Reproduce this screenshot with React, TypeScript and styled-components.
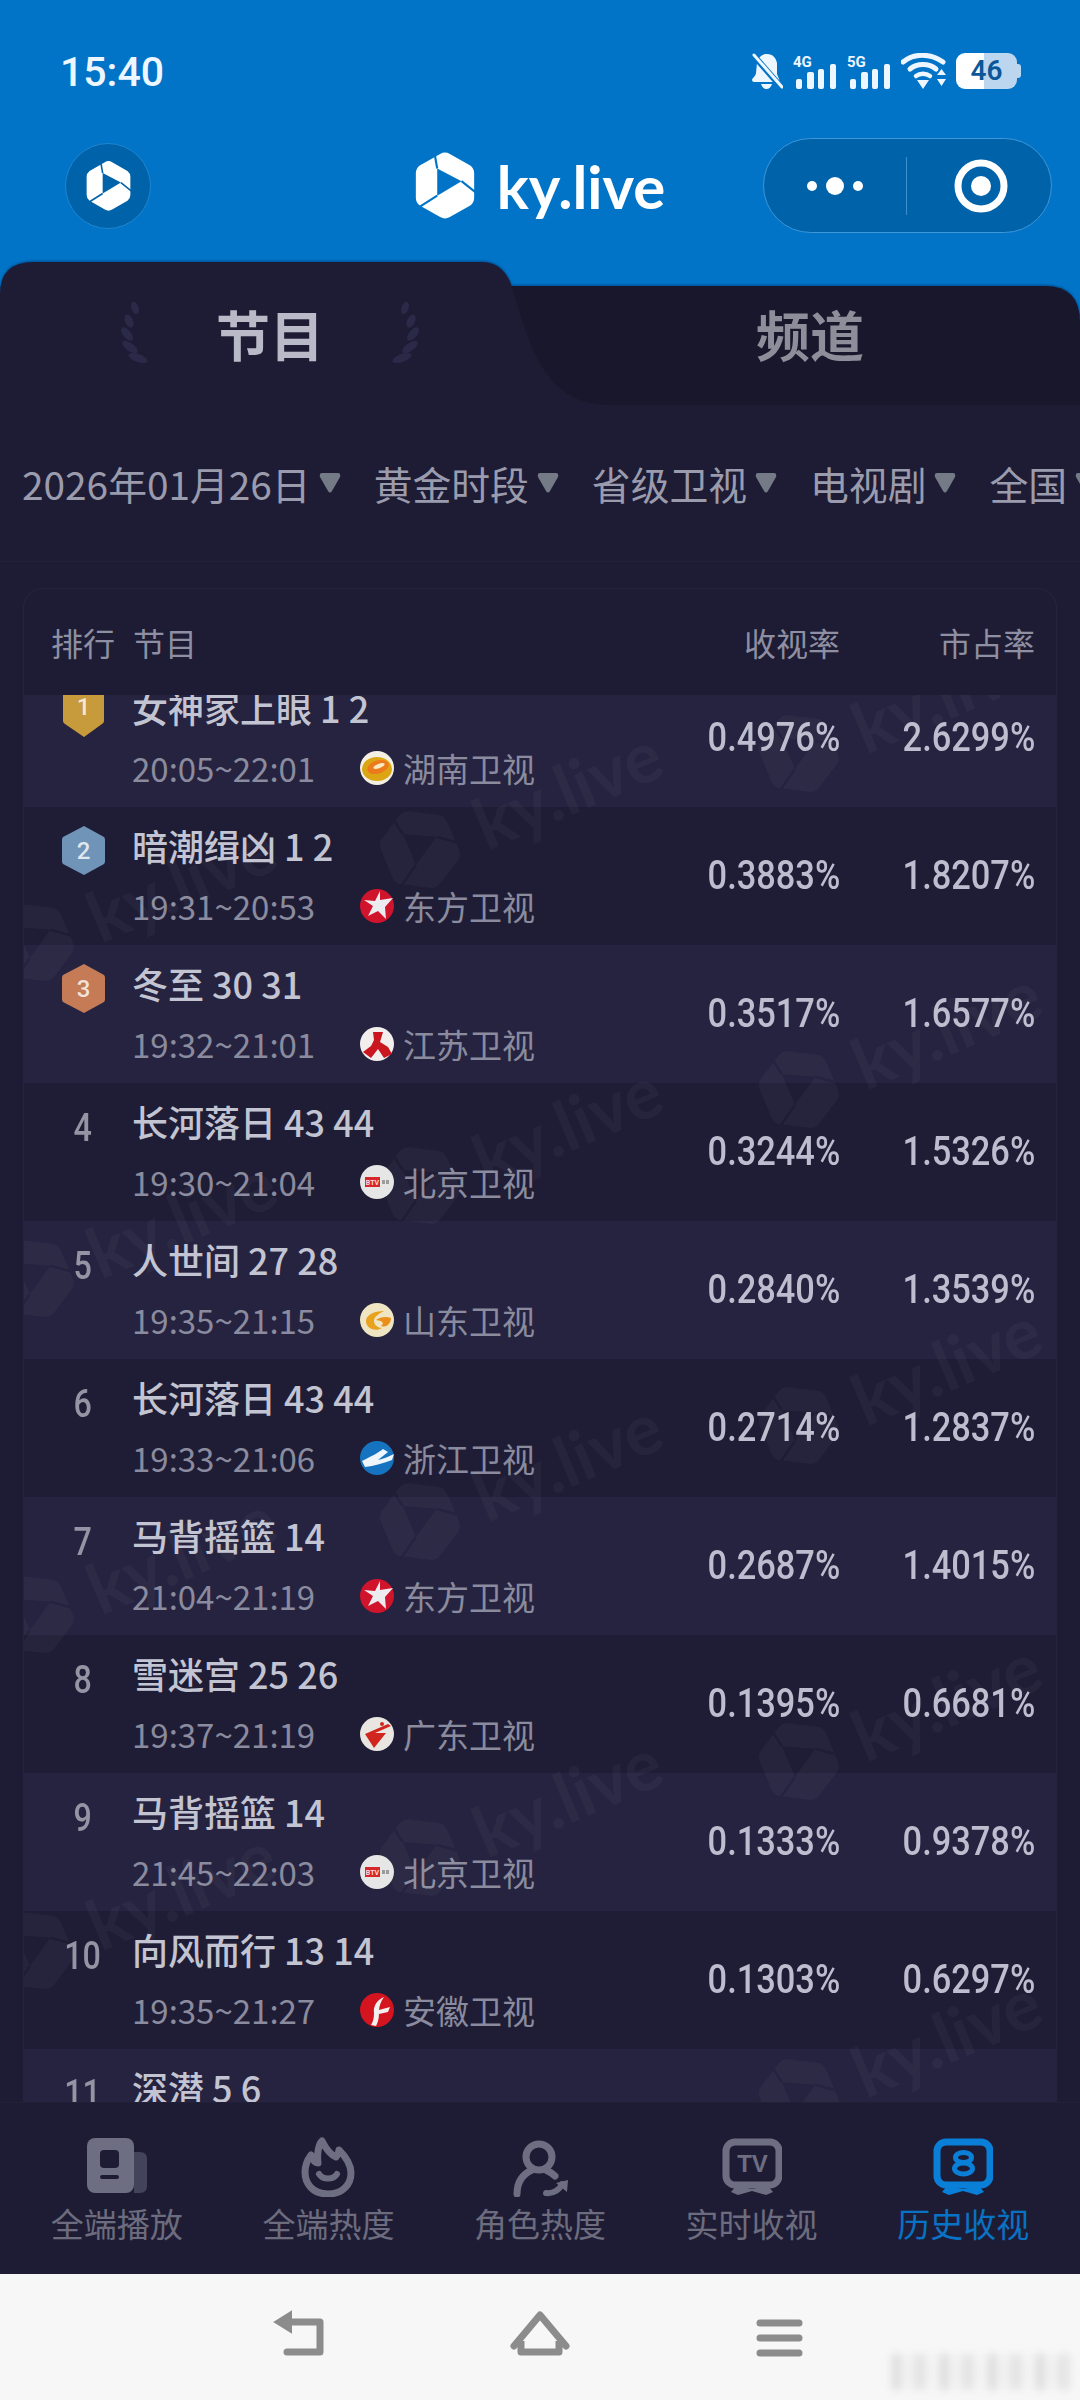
import React, { useId } from 'react';
import styled, { createGlobalStyle } from 'styled-components';

const CJK = '"Noto Sans CJK SC", "Noto Sans", sans-serif';
const BG = '#1e1c34';

const GlobalStyle = createGlobalStyle`
  html, body { margin: 0; padding: 0; background: ${BG}; }
  * { box-sizing: border-box; }
`;

const Page = styled.div`
  width: 1080px;
  height: 2400px;
  display: flex;
  flex-direction: column;
  overflow: hidden;
  background: ${BG};
  font-family: ${CJK};
`;

const Header = styled.header`
  background: #0174c8;
  height: 262px;
`;

const StatusBar = styled.div`
  height: 138px;
  padding: 52px 60px 0;
  display: flex;
  justify-content: space-between;
  align-items: flex-start;
`;

const Clock = styled.span`
  font: 500 41px/40px Roboto, sans-serif;
  color: #eef6ff;
`;

const StatusIcons = styled.div`
  display: flex;
  align-items: flex-start;
  gap: 10px;
  height: 36px;
  margin-top: 1px;
`;

const Battery = styled.div`
  position: relative;
  width: 61px;
  height: 36px;
  margin-right: 3px;
  border-radius: 9px;
  background: linear-gradient(90deg, #fff 0 46%, #bcd6ef 46% 100%);
  color: #0b5698;
  font: 600 28px/36px Roboto, sans-serif;
  text-align: center;
  &::after {
    content: '';
    position: absolute;
    right: -4px;
    top: 11px;
    width: 4px;
    height: 14px;
    border-radius: 0 3px 3px 0;
    background: #bcd6ef;
  }
`;

const AppBar = styled.div`
  height: 95px;
  padding: 0 28px;
  display: grid;
  grid-template-columns: 1fr auto 1fr;
  align-items: center;
`;

const AvatarCell = styled.div`
  padding-left: 37px;
`;

const Avatar = styled.div`
  width: 86px;
  height: 86px;
  border-radius: 50%;
  background: #0062a8;
  border: 1px solid #1f86d0;
  display: flex;
  align-items: center;
  justify-content: center;
`;

const Brand = styled.div`
  display: flex;
  align-items: center;
  gap: 22px;
  color: #fff;
  font: 700 60px/70px Lato, sans-serif;
`;

const Capsule = styled.div`
  justify-self: end;
  width: 289px;
  height: 95px;
  border-radius: 48px;
  background: #0062a8;
  border: 1.5px solid #3d97db;
  display: flex;
  align-items: center;
`;

const CapsuleCell = styled.div`
  flex: 1;
  display: flex;
  align-items: center;
  justify-content: center;
  & + & {
    flex: 0 0 145px;
    height: 58px;
    padding-left: 4px;
    border-left: 1.5px solid #3d8fcf;
  }
`;

const Tabs = styled.nav`
  position: relative;
  height: 143px;
  display: flex;
  background: #0174c8;
`;

const TabShape = styled.svg`
  position: absolute;
  left: 0;
  top: 0;
  filter: drop-shadow(0 -1px 1px rgba(0, 40, 90, 0.55));
`;

const Tab = styled.div<{ $active?: boolean }>`
  position: relative;
  flex: 1;
  display: flex;
  align-items: center;
  justify-content: center;
  gap: 66px;
  color: ${(p) => (p.$active ? '#b9bac7' : '#8e8e9b')};
  font-size: 54px;
  font-weight: 700;
  line-height: 60px;
`;

const FilterRow = styled.div`
  height: 157px;
  padding-left: 22px;
  display: flex;
  align-items: center;
  gap: 33px;
  overflow: hidden;
  white-space: nowrap;
  border-bottom: 1px solid rgba(255, 255, 255, 0.025);
`;

const FilterItem = styled.div`
  flex: none;
  display: flex;
  align-items: center;
  gap: 8px;
  color: #9a9bad;
  font-size: 38.8px;
  line-height: 50px;
`;

const Card = styled.section`
  flex: 1;
  min-height: 0;
  margin: 26px 23px 0;
  display: flex;
  flex-direction: column;
  border: 1px solid rgba(255, 255, 255, 0.035);
  border-bottom: none;
  border-radius: 20px 20px 0 0;
`;

const TableHead = styled.div`
  flex: none;
  height: 106px;
  padding: 0 21px 0 27px;
  display: grid;
  grid-template-columns: 82px 1fr 195px 195px;
  align-items: center;
  color: #8e8fa2;
  font-size: 32px;
`;

const HeadRight = styled.span`
  text-align: right;
`;

const TableBody = styled.div`
  position: relative;
  flex: 1;
  min-height: 0;
  overflow: hidden;
`;

const RowList = styled.div`
  margin-top: -26px;
`;

const Row = styled.div<{ $odd: boolean }>`
  height: 138px;
  padding-right: 21px;
  display: grid;
  grid-template-columns: 108px 1fr 195px 195px;
  background: ${(p) => (p.$odd ? '#262340' : '#1f1d35')};
`;

const RankCell = styled.div`
  padding: 19px 0 0 10px;
  display: flex;
  justify-content: center;
  height: 100%;
`;

const RankNumber = styled.span`
  margin-top: 1px;
  color: #9394a4;
  font: 500 38px/50px Roboto, sans-serif;
  transform: scaleX(0.85);
`;

const Info = styled.div`
  padding-top: 18px;
  display: flex;
  flex-direction: column;
  gap: 21px;
`;

const Title = styled.div`
  color: #c3c4d2;
  font-size: 36px;
  font-weight: 500;
  line-height: 40px;
  white-space: nowrap;
`;

const Sub = styled.div`
  display: flex;
  align-items: center;
  color: #8a8b9e;
  font-size: 33px;
  line-height: 40px;
`;

const Time = styled.span`
  width: 228px;
`;

const ChannelName = styled.span`
  margin-left: 9px;
`;

const Value = styled.div`
  display: flex;
  align-items: center;
  justify-content: flex-end;
  & > span {
    color: #bcbdce;
    font: 500 40px/40px Roboto, sans-serif;
    transform: scaleX(0.86);
    transform-origin: right center;
  }
`;

const WatermarkItem = styled.div`
  position: absolute;
  display: flex;
  align-items: center;
  gap: 24px;
  color: rgba(255, 255, 255, 0.034);
  font: 700 70px/90px Lato, sans-serif;
  white-space: nowrap;
  transform: rotate(-23deg);
  transform-origin: 37px 45px;
  pointer-events: none;
`;

const BottomTabs = styled.nav`
  flex: none;
  height: 172px;
  padding: 34px 11px 0;
  display: grid;
  grid-template-columns: repeat(5, 1fr);
  background: ${BG};
  border-top: 1px solid rgba(255, 255, 255, 0.02);
`;

const BottomTab = styled.div<{ $active?: boolean }>`
  display: flex;
  flex-direction: column;
  align-items: center;
  color: ${(p) => (p.$active ? '#0872c4' : '#6c6c7e')};
  font-size: 33px;
  line-height: 40px;
  gap: 6px;
`;

const NavBar = styled.div`
  position: relative;
  flex: none;
  height: 126px;
  background: #f7f7f7;
`;

const NavIcons = styled.svg`
  display: block;
`;

const BlurMark = styled.div`
  position: absolute;
  left: 892px;
  top: 80px;
  width: 178px;
  height: 36px;
  filter: blur(4px);
  opacity: 0.7;
  background: repeating-linear-gradient(90deg, #cfcfcf 0 8px, #f0f0f0 8px 22px, #dcdcdc 22px 34px, #f4f4f4 34px 48px);
`;

const HEX =
  'M25 2Q30 -1 35 2L56 14Q60 17 60 22L60 47Q60 52 56 55L35 67Q30 70 25 67L4 55Q0 52 0 47L0 22Q0 17 4 14Z';

const KyLogo = ({ width, color }: { width: number; color: string }) => {
  const id = useId();
  return (
    <svg width={width} height={(width * 69) / 60} viewBox="0 -1 60 71">
      <mask id={id}>
        <rect x="-1" y="-2" width="62" height="73" fill="#fff" />
        <path d="M22 17L19 0M47 30L62 42M22 45L3 57" stroke="#000" strokeWidth="2.200" fill="none" />
      </mask>
      <path fillRule="evenodd" fill={color} mask={`url(#${id})`} d={`${HEX}M22 17L47 30L22 45Z`} />
    </svg>
  );
};

const BellOff = () => (
  <svg width="31" height="36" viewBox="0 0 31 36">
    <path
      fill="#eef6ff"
      d="M15 1C9 1 6 5 5 10L4 20C4 23 0 25 0 27C0 29 2 29 4 29H24C27 29 28 28 27 26L25 21L25 10C24 5 21 1 15 1Z"
    />
    <path fill="#eef6ff" d="M9 31H20C19 34 17 36 14.500 36C12 36 10 34 9 31Z" />
    <path d="M2 3L30 35" stroke="#0174c8" strokeWidth="6" />
    <path d="M2 2L30 34" stroke="#eef6ff" strokeWidth="3" strokeLinecap="round" />
  </svg>
);

const Signal = ({ label }: { label: string }) => (
  <svg width="44" height="36" viewBox="0 0 44 36">
    <text x="0" y="14" fontFamily="Roboto, sans-serif" fontWeight="700" fontSize="15" fill="#eef6ff">
      {label}
    </text>
    <rect x="3" y="26" width="6" height="10" rx="2" fill="#eef6ff" />
    <rect x="14" y="19" width="7" height="17" rx="2" fill="#eef6ff" />
    <rect x="25" y="16" width="6" height="20" rx="2" fill="#eef6ff" />
    <rect x="37" y="11" width="6" height="25" rx="2" fill="#eef6ff" />
  </svg>
);

const Wifi = () => (
  <svg width="45" height="36" viewBox="0 0 45 36" fill="none">
    <path d="M2 9C13 0 29 0 42 9" stroke="#eef6ff" strokeWidth="5" strokeLinecap="round" />
    <path d="M9 16C16 10 28 10 35 16" stroke="#eef6ff" strokeWidth="5" strokeLinecap="round" />
    <path d="M15 23C19 20 25 20 29 23" stroke="#eef6ff" strokeWidth="4.500" strokeLinecap="round" />
    <path d="M16 27H28L22 36Z" fill="#eef6ff" />
    <path d="M36 22L40.500 16L45 22ZM36 26H45L40.500 33Z" fill="#eef6ff" />
  </svg>
);

const Laurel = ({ flip }: { flip?: boolean }) => (
  <svg width="30" height="63" viewBox="0 0 30 63" style={flip ? { transform: 'scaleX(-1)' } : undefined}>
    <g fill="#2a2947">
      <ellipse cx="15" cy="6" rx="3.500" ry="6.500" transform="rotate(-20 15 6)" />
      <ellipse cx="9" cy="19" rx="4" ry="7" transform="rotate(-25 9 19)" />
      <ellipse cx="7" cy="32" rx="4" ry="8" transform="rotate(-40 7 32)" />
      <ellipse cx="10" cy="45" rx="4" ry="9" transform="rotate(-55 10 45)" />
      <ellipse cx="18" cy="56" rx="4" ry="10" transform="rotate(-70 18 56)" />
    </g>
  </svg>
);

const FilterArrow = () => (
  <svg width="22" height="20" viewBox="0 0 22 20">
    <path d="M3 0H19Q22 0 21 4L13 18Q11 21 9 18L1 4Q0 0 3 0Z" fill="#757a87" />
  </svg>
);

const RankBadge = ({ rank }: { rank: number }) => {
  const fill = rank === 1 ? '#c79a3c' : rank === 2 ? '#6f94b8' : '#c47b56';
  const shape =
    rank === 1
      ? 'M6 1H37Q42 1 42 6V33Q42 35 40 36L22 49L3 36Q1 35 1 33V6Q1 1 6 1Z'
      : 'M22 0L42 11Q43 12 43 14V35Q43 37 42 38L22 49L1 38Q0 37 0 35V14Q0 12 1 11Z';
  return (
    <svg width="43" height="49" viewBox="0 0 43 49">
      <path d={shape} fill={fill} />
      <text
        x="21.500"
        y={rank === 1 ? 27 : 33}
        textAnchor="middle"
        fontFamily="Roboto, sans-serif"
        fontWeight="500"
        fontSize="24"
        fill="rgba(255,255,255,0.78)"
      >
        {rank}
      </text>
    </svg>
  );
};

type ChannelKey = 'hunan' | 'dragon' | 'jiangsu' | 'beijing' | 'shandong' | 'zhejiang' | 'guangdong' | 'anhui';

const ChannelLogo = ({ channel }: { channel: ChannelKey }) => {
  const art: Record<ChannelKey, React.ReactNode> = {
    hunan: (
      <>
        <circle cx="17" cy="17" r="17" fill="#f3efe2" />
        <ellipse cx="17" cy="18" rx="15" ry="12" fill="#dba513" />
        <ellipse cx="18" cy="16" rx="11" ry="6.500" fill="#ec7a1c" transform="rotate(-18 18 16)" />
        <ellipse cx="19" cy="15" rx="6" ry="2.200" fill="#fbe9c0" transform="rotate(-20 19 15)" />
      </>
    ),
    dragon: (
      <>
        <circle cx="17" cy="17" r="17" fill="#d0142c" />
        <path d="M20 2L20 11L33 9L25 18L26 30L18 22L8 27L13 17L4 11L15 12Z" fill="#ecebef" />
      </>
    ),
    jiangsu: (
      <>
        <circle cx="17" cy="17" r="17" fill="#f2eeee" />
        <path d="M13 5H23L20 15L28 20L32 27L24 31L18 22L11 31L3 25L11 19L14 13Z" fill="#c9161f" />
      </>
    ),
    beijing: (
      <>
        <circle cx="17" cy="17" r="17" fill="#e6e6e6" />
        <rect x="5" y="12" width="15" height="10" fill="#d62828" />
        <text x="12.500" y="20" textAnchor="middle" fontSize="7" fontWeight="700" fontFamily="Roboto, sans-serif" fill="#f6dcdc">
          BTV
        </text>
        <rect x="22" y="15" width="3" height="4" fill="#999" />
        <rect x="26" y="15" width="3" height="4" fill="#999" />
      </>
    ),
    shandong: (
      <>
        <circle cx="17" cy="17" r="17" fill="#efe5c2" />
        <path d="M6 18C6 12 14 8 24 8C18 11 14 14 14 18C14 22 18 25 22 25C16 29 6 26 6 18Z" fill="#e8a21e" />
        <path d="M16 17C20 14 26 13 31 15C31 21 26 25 21 23C24 21 24 18 16 17Z" fill="#e98f1a" />
      </>
    ),
    zhejiang: (
      <>
        <circle cx="17" cy="17" r="17" fill="#1673c0" />
        <path d="M2 20C12 15 18 12 23 8L28 11L18 19C23 18 28 16 34 13L32 19C24 22 14 25 5 26Z" fill="#eef6fb" />
      </>
    ),
    guangdong: (
      <>
        <circle cx="17" cy="17" r="17" fill="#e9e6e2" />
        <path d="M5 17L28 7L31 9L15 16L26 16L14 31Z" fill="#d1261f" />
        <circle cx="22" cy="7" r="2" fill="#d1261f" />
      </>
    ),
    anhui: (
      <>
        <circle cx="17" cy="17" r="17" fill="#d4141f" />
        <path d="M24 4C17 7 13 13 14 20C14 25 13 29 11 32L16 33C19 28 19 22 19 18C19 13 21 8 24 4Z" fill="#f4f0f0" />
        <path d="M19 17L30 14L28 19L19 21Z" fill="#f4f0f0" />
      </>
    ),
  };
  return (
    <svg width="34" height="34" viewBox="0 0 34 34">
      {art[channel]}
    </svg>
  );
};

const PlayIcon = () => (
  <svg width="60" height="60" viewBox="0 0 60 60">
    <rect x="0" y="1" width="47" height="55" rx="8" fill="#6e6e82" />
    <path d="M47 15H53Q60 15 60 22V49Q60 56 53 56H47Z" fill="#44435c" />
    <rect x="13" y="13" width="19" height="18" rx="4" fill={BG} />
    <rect x="13" y="38" width="19" height="4" rx="2" fill={BG} />
  </svg>
);

const HeatIcon = () => (
  <svg width="60" height="60" viewBox="0 0 60 60" fill="none" stroke="#6e6e82">
    <path
      strokeWidth="7"
      strokeLinejoin="round"
      d="M30 57C15 57 7 47 7 35C7 28 10 22 13 18C15 24 17 26 20 26C19 18 20 8 24 4C28 12 33 18 38 20C40 17 41 15 41 13C48 20 53 27 53 36C53 48 44 57 30 57Z"
    />
    <path strokeWidth="6" strokeLinecap="round" d="M21 37C25 43 35 43 39 37" />
  </svg>
);

const RoleIcon = () => (
  <svg width="60" height="60" viewBox="0 0 60 60" fill="none" stroke="#6e6e82">
    <circle cx="29" cy="20" r="13" strokeWidth="7" />
    <path strokeWidth="7" strokeLinecap="round" d="M7 57C7 45 13 37 22 33" />
    <path strokeWidth="7" strokeLinecap="round" d="M36 33C40 35 43 37 45 39" />
    <path strokeWidth="6" strokeLinecap="round" d="M36 56C44 57 50 52 52 47" />
    <path d="M46 46L58 43L57 55Z" fill="#6e6e82" stroke="none" />
  </svg>
);

const TvFrame = ({ color, children }: { color: string; children: React.ReactNode }) => (
  <svg width="60" height="60" viewBox="0 0 60 60" fill="none">
    <rect x="4" y="5" width="53" height="43" rx="9" stroke={color} strokeWidth="7" />
    <path d="M14 49L30 52L46 49L51 55L44 58L30 54L16 58L9 55Z" fill={color} />
    {children}
  </svg>
);

const tabs = [
  { label: '全端播放', icon: <PlayIcon /> },
  { label: '全端热度', icon: <HeatIcon /> },
  { label: '角色热度', icon: <RoleIcon /> },
  {
    label: '实时收视',
    icon: (
      <TvFrame color="#6e6e82">
        <text x="30.500" y="35" textAnchor="middle" fontFamily="Liberation Sans, sans-serif" fontWeight="700" fontSize="24" fill="#6e6e82">
          TV
        </text>
      </TvFrame>
    ),
  },
  {
    label: '历史收视',
    active: true,
    icon: (
      <TvFrame color="#0a7fd8">
        <ellipse cx="30.500" cy="20.500" rx="8" ry="5" stroke="#0a7fd8" strokeWidth="5" />
        <ellipse cx="30.500" cy="31.500" rx="9" ry="5.500" stroke="#0a7fd8" strokeWidth="5" />
      </TvFrame>
    ),
  },
];

const filters = ['2026年01月26日', '黄金时段', '省级卫视', '电视剧', '全国'];

const rows: { title: string; time?: string; logo?: ChannelKey; channel?: string; rating?: string; share?: string }[] = [
  { title: '女神家上眼 1 2', time: '20:05~22:01', logo: 'hunan', channel: '湖南卫视', rating: '0.4976%', share: '2.6299%' },
  { title: '暗潮缉凶 1 2', time: '19:31~20:53', logo: 'dragon', channel: '东方卫视', rating: '0.3883%', share: '1.8207%' },
  { title: '冬至 30 31', time: '19:32~21:01', logo: 'jiangsu', channel: '江苏卫视', rating: '0.3517%', share: '1.6577%' },
  { title: '长河落日 43 44', time: '19:30~21:04', logo: 'beijing', channel: '北京卫视', rating: '0.3244%', share: '1.5326%' },
  { title: '人世间 27 28', time: '19:35~21:15', logo: 'shandong', channel: '山东卫视', rating: '0.2840%', share: '1.3539%' },
  { title: '长河落日 43 44', time: '19:33~21:06', logo: 'zhejiang', channel: '浙江卫视', rating: '0.2714%', share: '1.2837%' },
  { title: '马背摇篮 14', time: '21:04~21:19', logo: 'dragon', channel: '东方卫视', rating: '0.2687%', share: '1.4015%' },
  { title: '雪迷宫 25 26', time: '19:37~21:19', logo: 'guangdong', channel: '广东卫视', rating: '0.1395%', share: '0.6681%' },
  { title: '马背摇篮 14', time: '21:45~22:03', logo: 'beijing', channel: '北京卫视', rating: '0.1333%', share: '0.9378%' },
  { title: '向风而行 13 14', time: '19:35~21:27', logo: 'anhui', channel: '安徽卫视', rating: '0.1303%', share: '0.6297%' },
  { title: '深潜 5 6' },
];

// watermark logo centres, in page coordinates
const marks: [number, number][] = [
  [420, 850], [420, 1186], [420, 1522], [420, 1858],
  [799, 754], [799, 1090], [799, 1426], [799, 1762], [799, 2098],
  [34, 943], [34, 1279], [34, 1615], [34, 1951],
];

export default function App() {
  return (
    <Page>
      <GlobalStyle />
      <Header>
        <StatusBar>
          <Clock>15:40</Clock>
          <StatusIcons>
            <BellOff />
            <Signal label="4G" />
            <Signal label="5G" />
            <Wifi />
            <Battery>46</Battery>
          </StatusIcons>
        </StatusBar>
        <AppBar>
          <AvatarCell>
            <Avatar>
              <KyLogo width={45} color="#fff" />
            </Avatar>
          </AvatarCell>
          <Brand>
            <KyLogo width={60} color="#fff" />
            ky.live
          </Brand>
          <Capsule>
            <CapsuleCell>
              <svg width="56" height="20" viewBox="0 0 56 20" fill="#fff">
                <circle cx="5" cy="10" r="5" />
                <circle cx="28" cy="10" r="9" />
                <circle cx="51" cy="10" r="5" />
              </svg>
            </CapsuleCell>
            <CapsuleCell>
              <svg width="54" height="54" viewBox="0 0 54 54" fill="none">
                <circle cx="27" cy="27" r="23" stroke="#fff" strokeWidth="7" />
                <circle cx="27" cy="27" r="10" fill="#fff" />
              </svg>
            </CapsuleCell>
          </Capsule>
        </AppBar>
      </Header>
      <Tabs>
        <TabShape width="1080" height="143" viewBox="0 0 1080 143">
          <path d="M480 143V24H1045Q1080 24 1080 60V143Z" fill="#18172c" />
          <path d="M0 143V32Q0 0 34 0H482Q505 0 513 28C530 85 545 143 610 143Z" fill={BG} />
        </TabShape>
        <Tab $active>
          <Laurel />
          节目
          <Laurel flip />
        </Tab>
        <Tab>频道</Tab>
      </Tabs>
      <FilterRow>
        {filters.map((f) => (
          <FilterItem key={f}>
            {f}
            <FilterArrow />
          </FilterItem>
        ))}
      </FilterRow>
      <Card>
        <TableHead>
          <span>排行</span>
          <span>节目</span>
          <HeadRight>收视率</HeadRight>
          <HeadRight>市占率</HeadRight>
        </TableHead>
        <TableBody>
          <RowList>
            {rows.map((r, i) => (
              <Row key={i} $odd={i % 2 === 0}>
                <RankCell>
                  {i < 3 ? <RankBadge rank={i + 1} /> : <RankNumber>{i + 1}</RankNumber>}
                </RankCell>
                <Info>
                  <Title>{r.title}</Title>
                  {r.time && r.logo && (
                    <Sub>
                      <Time>{r.time}</Time>
                      <ChannelLogo channel={r.logo} />
                      <ChannelName>{r.channel}</ChannelName>
                    </Sub>
                  )}
                </Info>
                <Value>
                  <span>{r.rating}</span>
                </Value>
                <Value>
                  <span>{r.share}</span>
                </Value>
              </Row>
            ))}
          </RowList>
          {marks.map(([x, y]) => (
            <WatermarkItem key={`${x}-${y}`} style={{ left: x - 37 - 24, top: y - 45 - 695 }}>
              <KyLogo width={74} color="currentColor" />
              ky.live
            </WatermarkItem>
          ))}
        </TableBody>
      </Card>
      <BottomTabs>
        {tabs.map((t) => (
          <BottomTab key={t.label} $active={t.active}>
            {t.icon}
            {t.label}
          </BottomTab>
        ))}
      </BottomTabs>
      <NavBar>
        <NavIcons width="1080" height="126" viewBox="0 0 1080 126" fill="none" stroke="#8c8c8c" strokeWidth="7">
          <path d="M284 48H320V78H287" strokeLinecap="round" strokeLinejoin="round" />
          <path d="M275 48L291 38V58Z" fill="#8c8c8c" strokeWidth="2" />
          <path d="M514 72L540 41L566 72" strokeLinecap="round" strokeLinejoin="round" />
          <path d="M521 67V78H559V67" strokeLinejoin="round" />
          <path d="M760 49H799M760 64H799M760 79H799" strokeLinecap="round" />
        </NavIcons>
        <BlurMark />
      </NavBar>
    </Page>
  );
}
